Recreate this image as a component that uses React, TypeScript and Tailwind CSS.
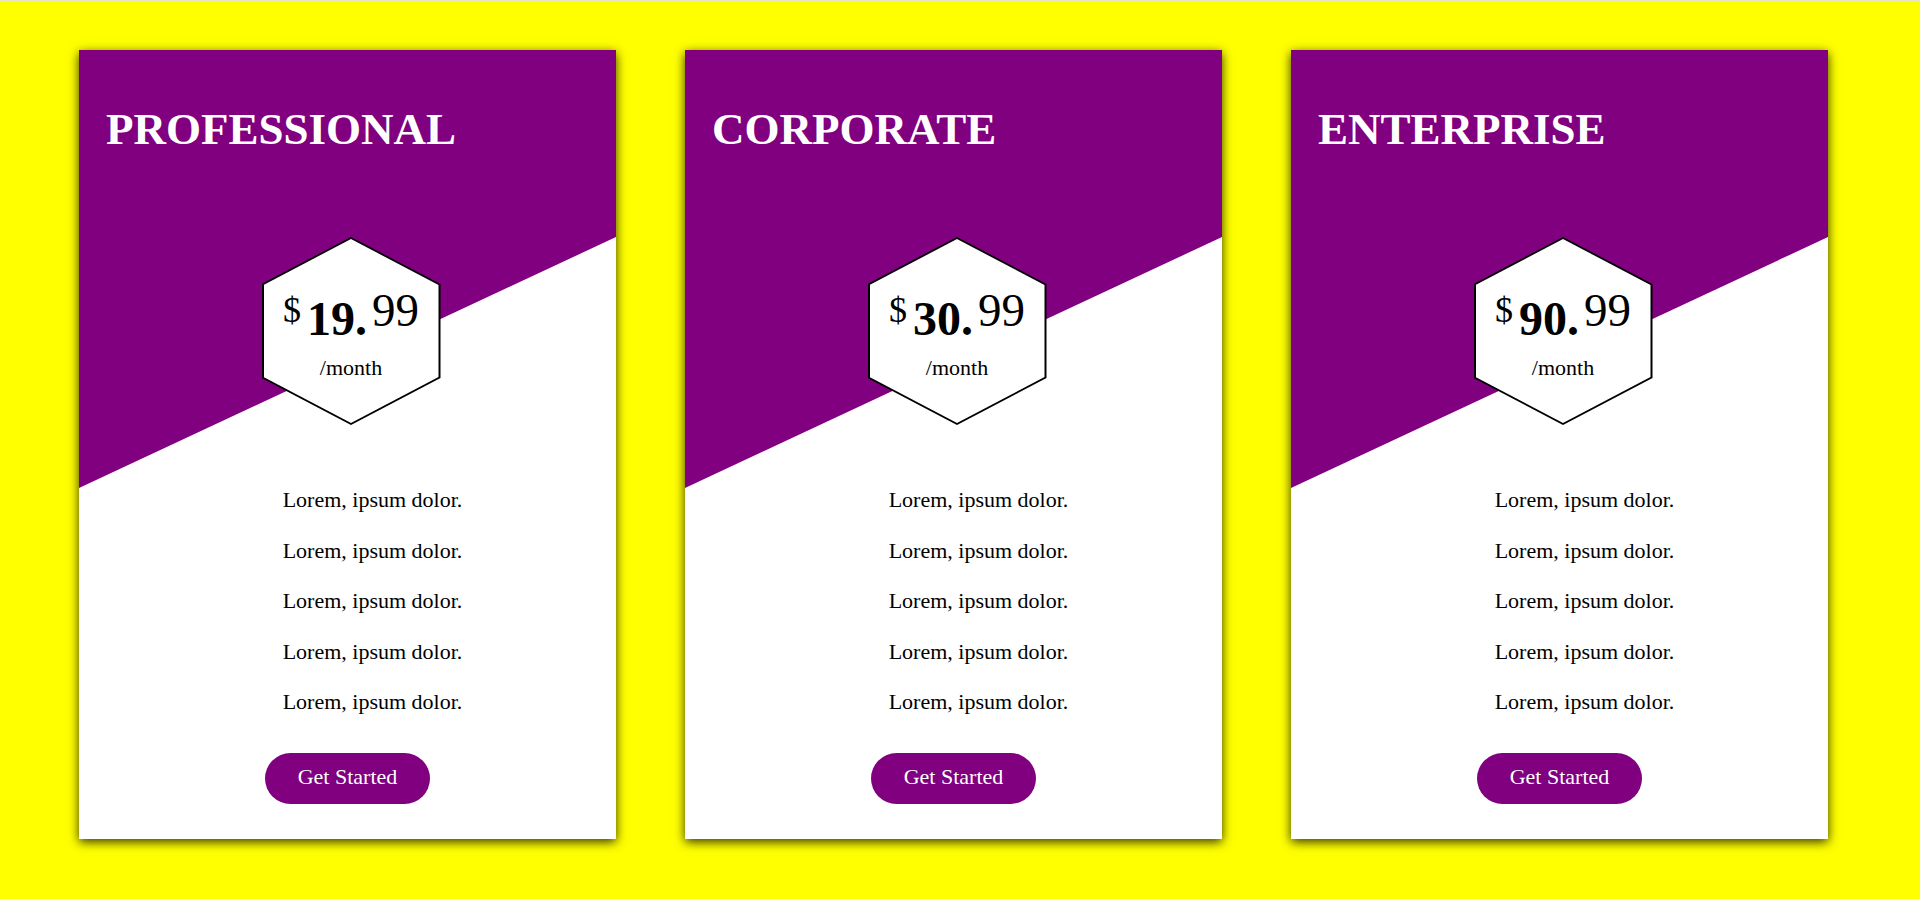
import React from "react";

type Plan = {
  name: string;
  whole: string;
  cents: string;
};

const plans: Plan[] = [
  { name: "PROFESSIONAL", whole: "19.", cents: "99" },
  { name: "CORPORATE", whole: "30.", cents: "99" },
  { name: "ENTERPRISE", whole: "90.", cents: "99" },
];

const features = [
  "Lorem, ipsum dolor.",
  "Lorem, ipsum dolor.",
  "Lorem, ipsum dolor.",
  "Lorem, ipsum dolor.",
  "Lorem, ipsum dolor.",
];

const PriceHex = ({ whole, cents }: { whole: string; cents: string }) => {
  return (
    <div className="h-[188px] w-[179px] bg-black p-[2px] [clip-path:polygon(50%_0,100%_25%,100%_75%,50%_100%,0_75%,0_25%)]">
      <div className="flex h-full w-full flex-col items-center bg-white [clip-path:polygon(50%_0,100%_25%,100%_75%,50%_100%,0_75%,0_25%)]">
        <div className="mt-[57px] whitespace-nowrap text-[48px] leading-[46px] text-black">
          <span className="mr-[6px] align-[13px] text-[36px] leading-[20px]">$</span>
          <span className="font-bold">{whole}</span>
          <span className="ml-[5px] align-[9px] text-[47px] leading-[20px]">{cents}</span>
        </div>
        <div className="mt-[15px] text-[22px] leading-[22px] text-black">/month</div>
      </div>
    </div>
  );
};

const PlanCard = ({ plan }: { plan: Plan }) => {
  return (
    <div className="relative h-[789px] w-[537px] shrink-0 bg-white shadow-[0_3px_10px_rgba(0,0,0,0.8)]">
      {/* diagonal purple backdrop */}
      <div className="absolute inset-0 bg-[#800080] [clip-path:polygon(0_0,100%_0,100%_187px,0_438px)]" />
      <div className="relative flex flex-col">
        <h2 className="pl-[27px] pt-[57px] text-[45px] font-bold leading-[45px] text-white">
          {plan.name}
        </h2>
        <div className="mt-[85px] flex justify-center pl-[7px]">
          <PriceHex whole={plan.whole} cents={plan.cents} />
        </div>
        <ul className="mt-[50px] pl-[50px] text-center text-[22px] leading-[50.5px] text-black">
          {features.map((f, i) => (
            <li key={i}>{f}</li>
          ))}
        </ul>
        <div className="mt-[25px] flex justify-center">
          <button className="h-[51px] w-[165px] rounded-full bg-[#800080] pb-[3px] text-[22px] leading-[25px] text-white">
            Get Started
          </button>
        </div>
      </div>
    </div>
  );
};

export default function App() {
  return (
    <div className="min-h-screen bg-[#ffff00] font-['Liberation_Serif','Times_New_Roman',serif]">
      <div className="h-px bg-[#e6e6c8]" />
      <div className="flex gap-[69px] pl-[79px] pt-[49px] pb-[60px]">
        {plans.map((p) => (
          <PlanCard key={p.name} plan={p} />
        ))}
      </div>
    </div>
  );
}
